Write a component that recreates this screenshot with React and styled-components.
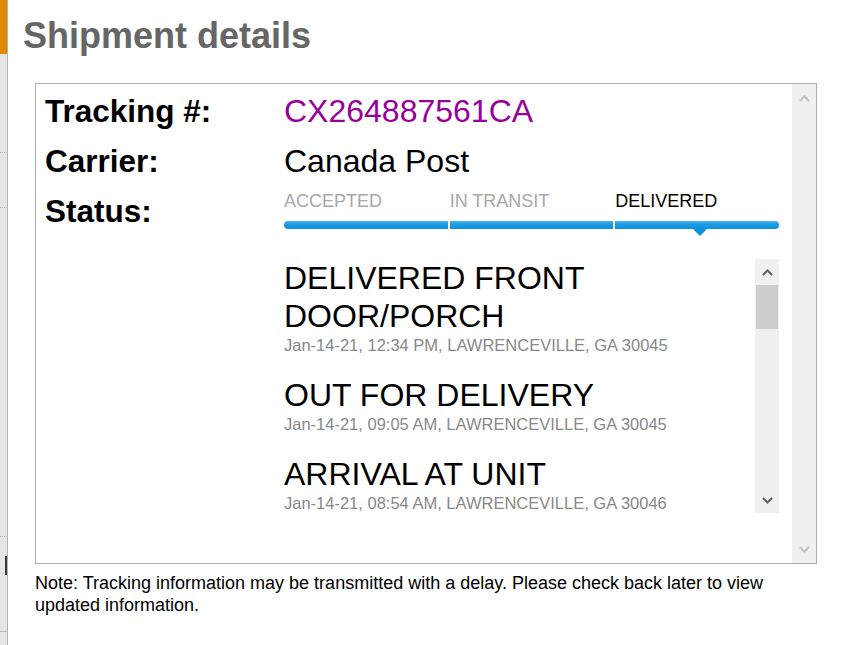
import React from "react";
import styled, { createGlobalStyle } from "styled-components";

const GlobalStyle = createGlobalStyle`
  html, body {
    margin: 0;
    padding: 0;
    background: #fff;
    font-family: "Liberation Sans", Arial, sans-serif;
  }
`;

const events = [
  {
    title: "DELIVERED FRONT DOOR/PORCH",
    info: "Jan-14-21, 12:34 PM, LAWRENCEVILLE, GA 30045",
  },
  {
    title: "OUT FOR DELIVERY",
    info: "Jan-14-21, 09:05 AM, LAWRENCEVILLE, GA 30045",
  },
  {
    title: "ARRIVAL AT UNIT",
    info: "Jan-14-21, 08:54 AM, LAWRENCEVILLE, GA 30046",
  },
];

const steps = ["ACCEPTED", "IN TRANSIT", "DELIVERED"];

function Chevron({ up, color }) {
  return (
    <svg width="11" height="7" viewBox="0 0 11 7">
      <path
        d={up ? "M1 6 L5.5 1.5 L10 6" : "M1 1 L5.5 5.5 L10 1"}
        fill="none"
        stroke={color}
        strokeWidth="2"
      />
    </svg>
  );
}

function App() {
  return (
    <Page>
      <GlobalStyle />
      <Sidebar>
        <Strip $h={54} $bg="#e08a00" />
        <Strip $h={99} $line="1px dotted #b5b5b5" />
        <Strip $h={55} $line="1px dotted #b5b5b5" />
        <Strip $h={329} $line="1px dotted #b5b5b5" />
        <Strip $h={19} />
        <Strip $h={19} $mark />
        <Strip $h={57} $line="1px solid #bcbcbc" />
      </Sidebar>

      <Main>
        <Title>Shipment details</Title>

        <Box>
          <Details>
            <Label>Tracking #:</Label>
            <Value $color="#990099">CX264887561CA</Value>
            <Label>Carrier:</Label>
            <Value>Canada Post</Value>
            <Label>Status:</Label>
            <StatusCell>
              <Steps>
                {steps.map((s, i) => (
                  <Step key={s}>
                    <StepLabel $active={i === steps.length - 1}>{s}</StepLabel>
                    <StepBar $first={i === 0} $last={i === steps.length - 1}>
                      {i === steps.length - 1 && <Pointer />}
                    </StepBar>
                  </Step>
                ))}
              </Steps>

              <EventPane>
                <EventList>
                  {events.map((e) => (
                    <Event key={e.info + e.title}>
                      <EventTitle>{e.title}</EventTitle>
                      <EventInfo>{e.info}</EventInfo>
                    </Event>
                  ))}
                </EventList>
                <ScrollTrack $w={24}>
                  <Arrow>
                    <Chevron up color="#606060" />
                  </Arrow>
                  <Thumb />
                  <TrackFill />
                  <Arrow>
                    <Chevron color="#606060" />
                  </Arrow>
                </ScrollTrack>
              </EventPane>
            </StatusCell>
          </Details>

          <ScrollTrack $w={24}>
            <Arrow $tall>
              <Chevron up color="#c2c2c2" />
            </Arrow>
            <TrackFill />
            <Arrow $tall>
              <Chevron color="#c2c2c2" />
            </Arrow>
          </ScrollTrack>
        </Box>

        <Note>
          Note: Tracking information may be transmitted with a delay. Please
          check back later to view updated information.
        </Note>
      </Main>
    </Page>
  );
}

const Page = styled.div`
  display: flex;
  min-height: 100vh;
`;

const Sidebar = styled.aside`
  width: 7px;
  flex: none;
  display: flex;
  flex-direction: column;
  background: #e5e5e5;
  border-right: 1px solid #b3b3b3;
`;

const Strip = styled.div`
  height: ${(p) => p.$h}px;
  flex: none;
  box-sizing: border-box;
  background: ${(p) => p.$bg || "transparent"};
  border-bottom: ${(p) => p.$line || "none"};
  border-right: ${(p) => (p.$mark ? "2px solid #3a3a3a" : "none")};
`;

const Main = styled.main`
  flex: 1;
  padding: 16px 0 0 15px;
`;

const Title = styled.h1`
  margin: 0 0 27px;
  font-size: 36px;
  line-height: 40px;
  font-weight: bold;
  color: #666;
`;

const Box = styled.section`
  margin-left: 12px;
  width: 782px;
  height: 481px;
  box-sizing: border-box;
  border: 1px solid #adadad;
  display: flex;
`;

const Details = styled.div`
  flex: 1;
  display: grid;
  grid-template-columns: 239px 1fr;
  grid-auto-rows: 50px;
  align-content: start;
  padding: 2px 13px 0 9px;
`;

const Label = styled.div`
  font-size: 31.5px;
  line-height: 50px;
  font-weight: bold;
  color: #000;
`;

const Value = styled.div`
  font-size: 32px;
  line-height: 50px;
  color: ${(p) => p.$color || "#000"};
`;

const StatusCell = styled.div`
  grid-row: span 6;
  padding-top: 5px;
`;

const Steps = styled.div`
  display: grid;
  grid-template-columns: repeat(3, 1fr);
  column-gap: 2px;
`;

const Step = styled.div`
  display: flex;
  flex-direction: column;
`;

const StepLabel = styled.span`
  font-size: 18px;
  line-height: 20px;
  color: ${(p) => (p.$active ? "#000" : "#a8a8a8")};
`;

const StepBar = styled.div`
  position: relative;
  margin-top: 10px;
  height: 8px;
  background: linear-gradient(#4ab5ef 0%, #1a9ce4 40%, #0f93dc 100%);
  border-radius: ${(p) =>
    p.$first ? "4px 0 0 4px" : p.$last ? "0 4px 4px 0" : "0"};
`;

const Pointer = styled.span`
  position: absolute;
  top: 8px;
  left: 50%;
  margin-left: -4px;
  border-left: 7px solid transparent;
  border-right: 7px solid transparent;
  border-top: 7px solid #0f93dc;
`;

const EventPane = styled.div`
  margin-top: 30px;
  height: 254px;
  display: flex;
`;

const EventList = styled.div`
  flex: 1;
  overflow: hidden;
`;

const Event = styled.div`
  padding-bottom: 21px;
`;

const EventTitle = styled.div`
  font-size: 32px;
  line-height: 38px;
  color: #000;
`;

const EventInfo = styled.div`
  font-size: 16.5px;
  line-height: 20px;
  color: #888;
`;

const ScrollTrack = styled.div`
  width: ${(p) => p.$w}px;
  flex: none;
  display: flex;
  flex-direction: column;
  background: #f0f0f0;
`;

const Arrow = styled.div`
  height: ${(p) => (p.$tall ? 28 : 26)}px;
  display: flex;
  align-items: center;
  justify-content: center;
`;

const Thumb = styled.div`
  height: 44px;
  margin: 0 1px;
  background: #cdcdcd;
`;

const TrackFill = styled.div`
  flex: 1;
`;

const Note = styled.p`
  margin: 8px 0 0 12px;
  width: 760px;
  font-size: 18px;
  line-height: 22px;
  color: #000;
`;

export default App;
